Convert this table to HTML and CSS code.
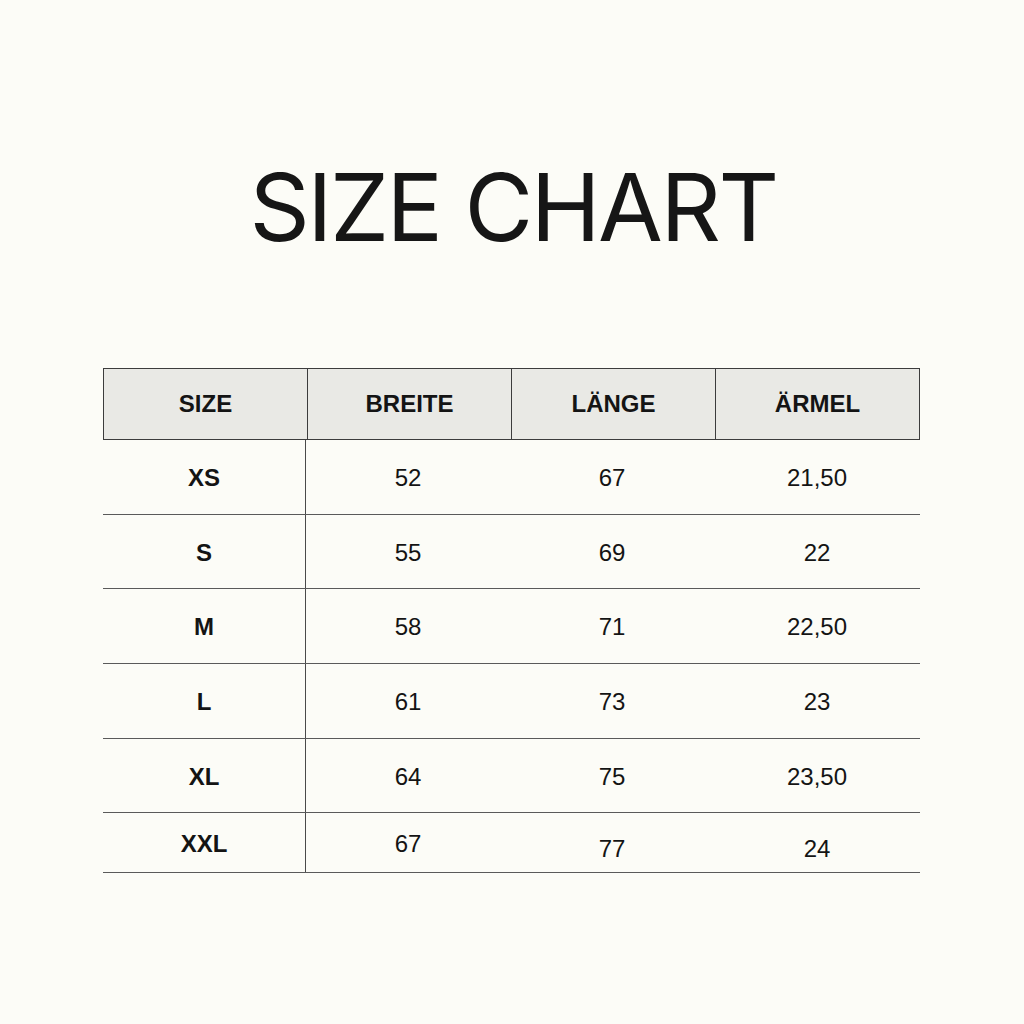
FILE: index.html
```html
<!DOCTYPE html>
<html lang="de">
<head>
<meta charset="utf-8">
<title>Size Chart</title>
<link rel="stylesheet" href="styles.css">
</head>
<body>
<div class="page">
  <h1 class="title">SIZE CHART</h1>
  <div class="chart">
    <div class="head">
      <div class="hcell">SIZE</div>
      <div class="hcell">BREITE</div>
      <div class="hcell">LÄNGE</div>
      <div class="hcell">ÄRMEL</div>
    </div>
    <div class="row"><div class="cell size">XS</div><div class="cell">52</div><div class="cell">67</div><div class="cell">21,50</div></div>
    <div class="row"><div class="cell size">S</div><div class="cell">55</div><div class="cell">69</div><div class="cell">22</div></div>
    <div class="row"><div class="cell size">M</div><div class="cell">58</div><div class="cell">71</div><div class="cell">22,50</div></div>
    <div class="row"><div class="cell size">L</div><div class="cell">61</div><div class="cell">73</div><div class="cell">23</div></div>
    <div class="row"><div class="cell size">XL</div><div class="cell">64</div><div class="cell">75</div><div class="cell">23,50</div></div>
    <div class="row last"><div class="cell size">XXL</div><div class="cell">67</div><div class="cell low">77</div><div class="cell low">24</div></div>
  </div>
</div>
</body>
</html>
```
FILE: styles.css
```css
html, body {
  margin: 0;
  padding: 0;
  background: #fcfcf7;
}
.page {
  width: 1024px;
  height: 1024px;
  padding-top: 160px;
  box-sizing: border-box;
}
.title {
  margin: 0;
  font-family: Inter, "Liberation Sans", sans-serif;
  font-weight: 400;
  font-size: 94px;
  line-height: 94px;
  height: 94px;
  text-align: center;
  color: #161616;
  letter-spacing: -2.5px;
  padding-left: 2px;
}
.chart {
  margin-top: 114px;
  margin-left: 103px;
  width: 817px;
  font-family: "Liberation Sans", Arial, sans-serif;
  color: #141414;
}
.head {
  display: grid;
  grid-template-columns: 204px 204px 204px 203px;
  border: 1px solid #3c3c3c;
  background: #e9e9e5;
  height: 72px;
  box-sizing: border-box;
}
.hcell {
  display: flex;
  align-items: center;
  justify-content: center;
  font-weight: 700;
  font-size: 24px;
  border-right: 1px solid #3c3c3c;
}
.hcell:last-child {
  border-right: none;
}
.row {
  display: grid;
  grid-template-columns: 203px 204px 204px 206px;
  height: 75px;
  border-bottom: 1px solid #5a5a5a;
  box-sizing: border-box;
}
.row:nth-child(3), .row:nth-child(6) {
  height: 74px;
}
.row.last {
  height: 60px;
}
.cell {
  display: flex;
  align-items: center;
  justify-content: center;
  font-size: 24px;
  padding-top: 2px;
}
.cell.size {
  font-weight: 700;
  border-right: 1px solid #4a4a4a;
}
.cell.low {
  padding-top: 12px;
}
```
